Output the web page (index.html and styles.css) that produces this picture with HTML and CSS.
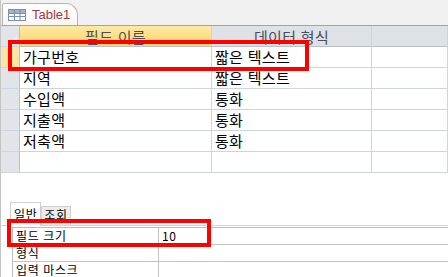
FILE: index.html
```html
<!DOCTYPE html>
<html lang="ko">
<head>
    <meta charset="UTF-8">
    <title>Table1</title>
    <link rel="stylesheet" href="styles.css">
</head>
<body>
    <div class="window">
        <!-- document tabs -->
        <div class="doc-tabs">
            <div class="doc-tab">
                <svg class="tab-icon" width="18" height="12" viewBox="0 0 18 12">
                    <rect x="0.5" y="0.5" width="17" height="11" fill="#fff" stroke="#7c8fb0"/>
                    <rect x="1" y="1" width="16" height="3" fill="#9fb2d4"/>
                    <path d="M1 4.5h16M1 7.5h16M6.5 1v10M12 1v10" stroke="#7c8fb0" fill="none"/>
                </svg>
                <span>Table1</span>
            </div>
        </div>

        <!-- design grid -->
        <div class="grid">
            <div class="cell sel corner">
                <svg width="8" height="8" viewBox="0 0 8 8"><path d="M8 0L0 8H8Z" fill="#f4f5f7"/></svg>
            </div>
            <div class="cell head name-head">필드 이름</div>
            <div class="cell head">데이터 형식</div>
            <div class="cell head"></div>

            <div class="cell sel current"></div>
            <div class="cell">가구번호</div>
            <div class="cell">짧은 텍스트</div>
            <div class="cell"></div>

            <div class="cell sel"></div>
            <div class="cell">지역</div>
            <div class="cell">짧은 텍스트</div>
            <div class="cell"></div>

            <div class="cell sel"></div>
            <div class="cell">수입액</div>
            <div class="cell">통화</div>
            <div class="cell"></div>

            <div class="cell sel"></div>
            <div class="cell">지출액</div>
            <div class="cell">통화</div>
            <div class="cell"></div>

            <div class="cell sel"></div>
            <div class="cell">저축액</div>
            <div class="cell">통화</div>
            <div class="cell"></div>

            <div class="cell sel"></div>
            <div class="cell"></div>
            <div class="cell"></div>
            <div class="cell"></div>
        </div>

        <!-- field properties -->
        <div class="props">
            <div class="prop-tabs">
                <div class="prop-tab active">일반</div>
                <div class="prop-tab">조회</div>
            </div>
            <div class="prop-table">
                <div class="prop-row">
                    <div class="prop-name">필드 크기</div>
                    <div class="prop-value">10</div>
                </div>
                <div class="prop-row">
                    <div class="prop-name">형식</div>
                    <div class="prop-value"></div>
                </div>
                <div class="prop-row">
                    <div class="prop-name">입력 마스크</div>
                    <div class="prop-value"></div>
                </div>
            </div>
        </div>

        <!-- annotation boxes -->
        <div class="mark mark-field"></div>
        <div class="mark mark-size"></div>
    </div>
</body>
</html>
```

FILE: styles.css
```css
html, body {
    margin: 0;
    padding: 0;
    background: #fff;
    overflow: hidden;
}
.window {
    position: relative;
    width: 448px;
    height: 277px;
    border-left: 1px solid #c4c4c4;
    box-sizing: border-box;
    font-family: "Noto Sans CJK KR", sans-serif;
    color: #000;
}
.doc-tabs {
    height: 25px;
    background: #f1f1f1;
    border-bottom: 1px solid #a3a3a3;
    display: flex;
    align-items: flex-end;
    padding-left: 1px;
}
.doc-tab {
    height: 22px;
    width: 76px;
    box-sizing: border-box;
    border: 1px solid #b4b4b4;
    border-bottom: none;
    border-radius: 2px 12px 0 0;
    background: linear-gradient(#ffffff, #f6f6f6);
    display: flex;
    align-items: center;
    gap: 6px;
    padding-left: 5px;
    font-family: "Liberation Sans", Arial, sans-serif;
    font-size: 13px;
    color: #a33a3e;
}
.grid {
    display: grid;
    grid-template-columns: 19px 192px 160px 1fr;
    grid-auto-rows: 21px;
}
.cell {
    box-sizing: border-box;
    border-right: 1px solid #cdd4e0;
    border-bottom: 1px solid #cdd4e0;
    font-size: 15px;
    line-height: 19px;
    padding-left: 3px;
    white-space: nowrap;
    letter-spacing: 0.3px;
}
.head {
    background: #dee1e6;
    color: #4a4f58;
    text-align: center;
    padding: 1px 0 0;
    border-bottom-color: #b8c0cc;
}
.name-head {
    background: linear-gradient(#fde9a6, #fbd665);
}
.sel {
    background: #e1e4e9;
    border-right-color: #b9c0cc;
    padding: 0;
}
.current {
    background: #fbe4a4;
}
.corner {
    display: flex;
    align-items: flex-end;
    justify-content: flex-end;
    padding: 0 2px 2px 0;
}
.props {
    margin-top: 29px;
    font-size: 12px;
    line-height: 16px;
    letter-spacing: 0.6px;
}
.prop-tabs {
    display: flex;
    align-items: flex-end;
    padding-left: 9px;
    height: 23px;
    border-bottom: 1px solid #d6d6d6;
}
.prop-tab {
    box-sizing: border-box;
    height: 19px;
    padding: 0 2px 0;
    background: #ececec;
    border: 1px solid #cfcfcf;
    border-bottom: none;
}
.prop-tab.active {
    height: 24px;
    padding: 3px 3px 0;
    background: #fff;
    border-color: #d0d0d0;
    margin-bottom: -1px;
}
.prop-table {
    margin: 1px 0 0 11px;
    border-top: 1px solid #bdbdbd;
    border-left: 1px solid #bdbdbd;
}
.prop-row {
    display: grid;
    grid-template-columns: 146px 1fr;
    height: 17px;
    box-sizing: border-box;
    border-bottom: 1px solid #c2c2c2;
}
.prop-name {
    padding-left: 3px;
    border-right: 1px solid #c2c2c2;
}
.prop-value {
    padding-left: 3px;
}
.mark {
    position: absolute;
    border: 4px solid #f00;
    box-sizing: border-box;
}
.mark-field {
    left: 7px;
    top: 40px;
    width: 301px;
    height: 31px;
}
.mark-size {
    left: 6px;
    top: 219px;
    width: 204px;
    height: 28px;
}
```
